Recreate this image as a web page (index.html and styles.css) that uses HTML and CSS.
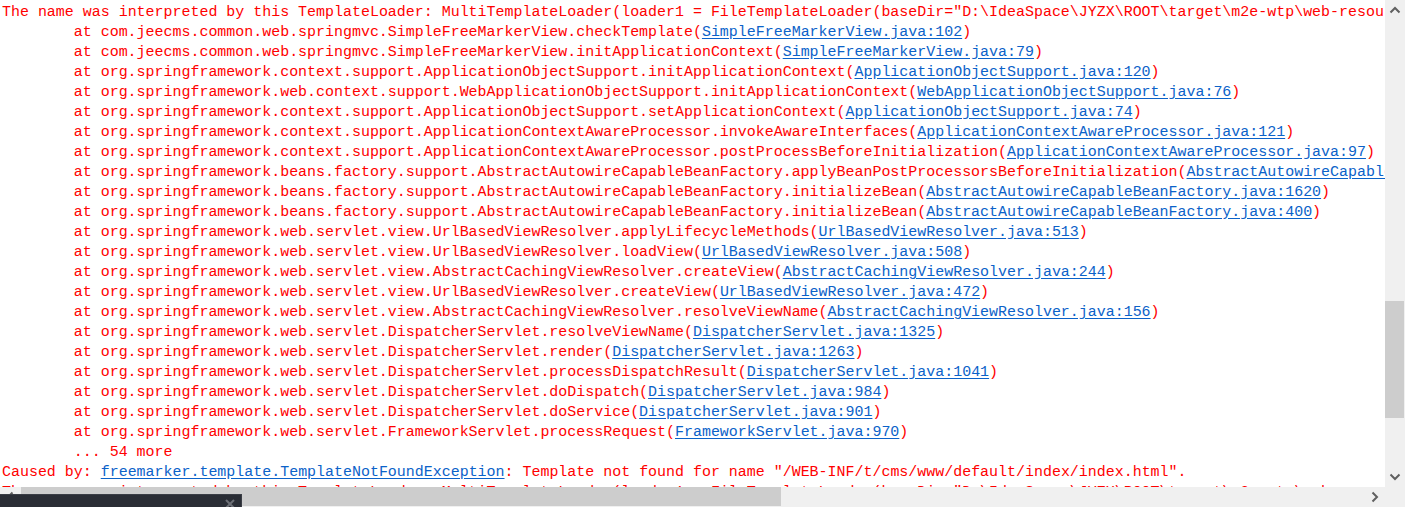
FILE: index.html
```html
<!DOCTYPE html>
<html lang="en">
<head>
  <meta charset="UTF-8">
  <title>Console</title>
  <link rel="stylesheet" href="styles.css">
</head>
<body>
  <div class="console-view">
    <div class="console-row">
      <div class="console">
        <div class="ln">The name was interpreted by this TemplateLoader: MultiTemplateLoader(loader1 = FileTemplateLoader(baseDir="D:\IdeaSpace\JYZX\ROOT\target\m2e-wtp\web-resources\WEB-INF\t\cms\www\default", canonicalBasePath="D:\IdeaSpace\JYZX\ROOT\target\m2e-wtp\web-resources\WEB-INF\t\cms\www\default\"))</div>
        <div class="ln frame">at com.jeecms.common.web.springmvc.SimpleFreeMarkerView.checkTemplate(<a href="#">SimpleFreeMarkerView.java:102</a>)</div>
        <div class="ln frame">at com.jeecms.common.web.springmvc.SimpleFreeMarkerView.initApplicationContext(<a href="#">SimpleFreeMarkerView.java:79</a>)</div>
        <div class="ln frame">at org.springframework.context.support.ApplicationObjectSupport.initApplicationContext(<a href="#">ApplicationObjectSupport.java:120</a>)</div>
        <div class="ln frame">at org.springframework.web.context.support.WebApplicationObjectSupport.initApplicationContext(<a href="#">WebApplicationObjectSupport.java:76</a>)</div>
        <div class="ln frame">at org.springframework.context.support.ApplicationObjectSupport.setApplicationContext(<a href="#">ApplicationObjectSupport.java:74</a>)</div>
        <div class="ln frame">at org.springframework.context.support.ApplicationContextAwareProcessor.invokeAwareInterfaces(<a href="#">ApplicationContextAwareProcessor.java:121</a>)</div>
        <div class="ln frame">at org.springframework.context.support.ApplicationContextAwareProcessor.postProcessBeforeInitialization(<a href="#">ApplicationContextAwareProcessor.java:97</a>)</div>
        <div class="ln frame">at org.springframework.beans.factory.support.AbstractAutowireCapableBeanFactory.applyBeanPostProcessorsBeforeInitialization(<a href="#">AbstractAutowireCapableBeanFactory.java:408</a>)</div>
        <div class="ln frame">at org.springframework.beans.factory.support.AbstractAutowireCapableBeanFactory.initializeBean(<a href="#">AbstractAutowireCapableBeanFactory.java:1620</a>)</div>
        <div class="ln frame">at org.springframework.beans.factory.support.AbstractAutowireCapableBeanFactory.initializeBean(<a href="#">AbstractAutowireCapableBeanFactory.java:400</a>)</div>
        <div class="ln frame">at org.springframework.web.servlet.view.UrlBasedViewResolver.applyLifecycleMethods(<a href="#">UrlBasedViewResolver.java:513</a>)</div>
        <div class="ln frame">at org.springframework.web.servlet.view.UrlBasedViewResolver.loadView(<a href="#">UrlBasedViewResolver.java:508</a>)</div>
        <div class="ln frame">at org.springframework.web.servlet.view.AbstractCachingViewResolver.createView(<a href="#">AbstractCachingViewResolver.java:244</a>)</div>
        <div class="ln frame">at org.springframework.web.servlet.view.UrlBasedViewResolver.createView(<a href="#">UrlBasedViewResolver.java:472</a>)</div>
        <div class="ln frame">at org.springframework.web.servlet.view.AbstractCachingViewResolver.resolveViewName(<a href="#">AbstractCachingViewResolver.java:156</a>)</div>
        <div class="ln frame">at org.springframework.web.servlet.DispatcherServlet.resolveViewName(<a href="#">DispatcherServlet.java:1325</a>)</div>
        <div class="ln frame">at org.springframework.web.servlet.DispatcherServlet.render(<a href="#">DispatcherServlet.java:1263</a>)</div>
        <div class="ln frame">at org.springframework.web.servlet.DispatcherServlet.processDispatchResult(<a href="#">DispatcherServlet.java:1041</a>)</div>
        <div class="ln frame">at org.springframework.web.servlet.DispatcherServlet.doDispatch(<a href="#">DispatcherServlet.java:984</a>)</div>
        <div class="ln frame">at org.springframework.web.servlet.DispatcherServlet.doService(<a href="#">DispatcherServlet.java:901</a>)</div>
        <div class="ln frame">at org.springframework.web.servlet.FrameworkServlet.processRequest(<a href="#">FrameworkServlet.java:970</a>)</div>
        <div class="ln frame">... 54 more</div>
        <div class="ln">Caused by: <a href="#">freemarker.template.TemplateNotFoundException</a>: Template not found for name "/WEB-INF/t/cms/www/default/index/index.html".</div>
        <div class="ln">The name was interpreted by this TemplateLoader: MultiTemplateLoader(loader1 = FileTemplateLoader(baseDir="D:\IdeaSpace\JYZX\ROOT\target\m2e-wtp\web-resources\WEB-INF\t\cms\www\default", canonicalBasePath="D:\IdeaSpace\JYZX\ROOT\target\m2e-wtp\web-resources\WEB-INF\t\cms\www\default\"))</div>
      </div>
      <div class="vscroll">
        <div class="sb-btn">
          <svg width="12" height="8" viewBox="0 0 12 8"><path d="M1.5 6.5 L6 2 L10.5 6.5" fill="none" stroke="#606060" stroke-width="2"/></svg>
        </div>
        <div class="vtrack">
          <div class="vthumb"></div>
        </div>
        <div class="sb-btn">
          <svg width="12" height="8" viewBox="0 0 12 8"><path d="M1.5 1.5 L6 6 L10.5 1.5" fill="none" stroke="#606060" stroke-width="2"/></svg>
        </div>
      </div>
    </div>
    <div class="hscroll">
      <div class="sb-btn">
        <svg width="8" height="12" viewBox="0 0 8 12"><path d="M6.5 1.5 L2 6 L6.5 10.5" fill="none" stroke="#606060" stroke-width="2"/></svg>
      </div>
      <div class="htrack">
        <div class="hthumb"></div>
      </div>
      <div class="sb-btn">
        <svg width="8" height="12" viewBox="0 0 8 12"><path d="M1.5 1.5 L6 6 L1.5 10.5" fill="none" stroke="#606060" stroke-width="2"/></svg>
      </div>
      <div class="corner"></div>
    </div>
  </div>

  <div class="toast">
    <svg class="toast-close" width="10" height="10" viewBox="0 0 10 10"><path d="M1 1 L9 9 M9 1 L1 9" stroke="#6b6e75" stroke-width="2"/></svg>
  </div>
</body>
</html>
```

FILE: styles.css
```css
html, body {
  margin: 0;
  padding: 0;
  background: #fff;
  overflow: hidden;
}
.console-view {
  width: 1405px;
  height: 507px;
  display: flex;
  flex-direction: column;
}
.console-row {
  flex: 1;
  display: flex;
  min-height: 0;
}
.console {
  flex: 1;
  overflow: hidden;
  padding: 2px 0 0 2px;
  font-family: "Liberation Mono", "DejaVu Sans Mono", monospace;
  font-size: 14.96px;
  line-height: 20px;
  color: #ff0000;
}
.ln {
  white-space: pre;
}
.frame {
  padding-left: 8ch;
}
.console a {
  color: #0b62c9;
  text-decoration: underline;
  text-underline-offset: 2px;
}
.vscroll {
  width: 20px;
  display: flex;
  flex-direction: column;
  background: #f0f0f0;
}
.sb-btn {
  width: 20px;
  height: 20px;
  display: flex;
  align-items: center;
  justify-content: center;
  flex-shrink: 0;
}
.vtrack {
  flex: 1;
  display: flex;
  flex-direction: column;
  padding-top: 281px;
}
.vthumb {
  width: 19px;
  height: 117px;
  background: #cdcdcd;
}
.hscroll {
  height: 20px;
  display: flex;
  background: #f0f0f0;
}
.htrack {
  flex: 1;
  display: flex;
  align-items: stretch;
  padding-left: 1px;
}
.hthumb {
  width: 760px;
  height: 19px;
  background: #cdcdcd;
}
.corner {
  width: 20px;
}
.toast {
  position: absolute;
  left: 0;
  top: 494px;
  width: 242px;
  height: 13px;
  background: #2a2d35;
  border-top: 1px solid #3b3e46;
  border-right: 1px solid #3b3e46;
  box-sizing: border-box;
}
.toast-close {
  position: absolute;
  left: 225px;
  top: 4px;
}
```
